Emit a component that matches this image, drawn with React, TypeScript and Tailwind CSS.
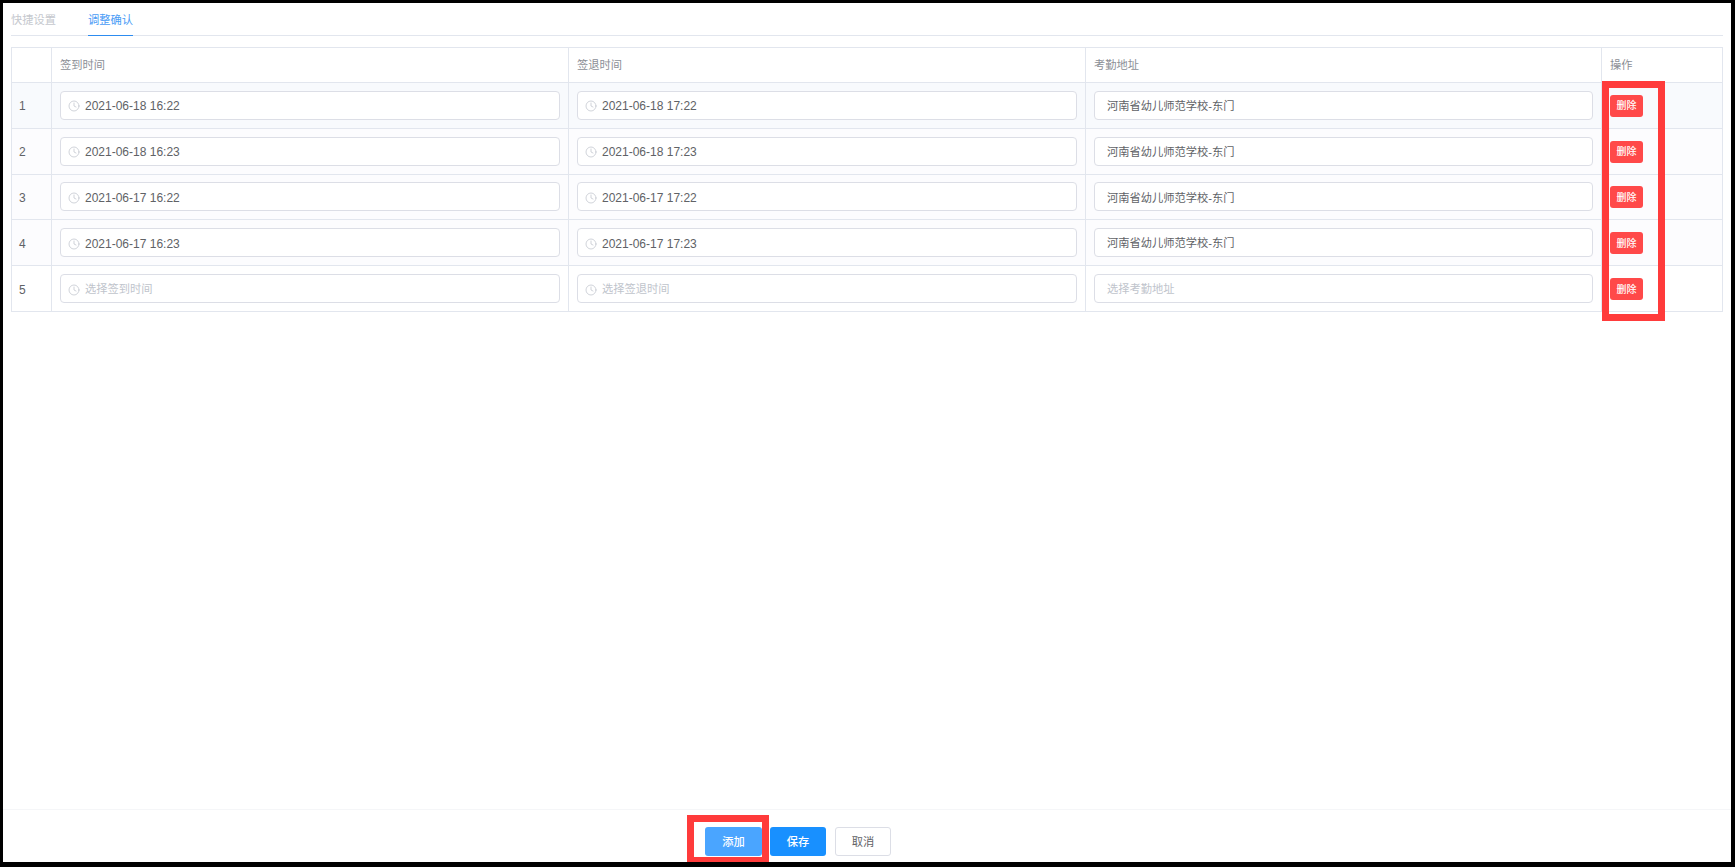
import { Clock } from "lucide-react";

type Row = {
  id: number;
  signIn: string;
  signOut: string;
  address: string;
};

const rows: Row[] = [
  { id: 1, signIn: "2021-06-18 16:22", signOut: "2021-06-18 17:22", address: "河南省幼儿师范学校-东门" },
  { id: 2, signIn: "2021-06-18 16:23", signOut: "2021-06-18 17:23", address: "河南省幼儿师范学校-东门" },
  { id: 3, signIn: "2021-06-17 16:22", signOut: "2021-06-17 17:22", address: "河南省幼儿师范学校-东门" },
  { id: 4, signIn: "2021-06-17 16:23", signOut: "2021-06-17 17:23", address: "河南省幼儿师范学校-东门" },
  { id: 5, signIn: "", signOut: "", address: "" },
];

const gridCols = "grid grid-cols-[40px_517px_517px_516px_1fr]";

function TimeInput({ value, placeholder }: { value: string; placeholder: string }) {
  return (
    <div className="flex h-[29px] w-full items-center rounded-[4px] border border-[#dcdee6] bg-white pt-[2px] pl-[7px]">
      <Clock size={12} strokeWidth={1.5} className="shrink-0 text-[#c0c4cc]" />
      <span className={value ? "ml-[5px] text-[12px] text-[#606266]" : "ml-[5px] text-[11.25px] text-[#c0c4cc]"}>
        {value || placeholder}
      </span>
    </div>
  );
}

function TextInput({ value, placeholder }: { value: string; placeholder: string }) {
  return (
    <div className="flex h-[29px] w-full items-center rounded-[4px] border border-[#dcdee6] bg-white pt-[2px] pl-[12px]">
      <span className={`text-[11.25px] ${value ? "text-[#606266]" : "text-[#c0c4cc]"}`}>
        {value || placeholder}
      </span>
    </div>
  );
}

function TableRow({ row }: { row: Row }) {
  const bg = row.id === 1 ? "bg-[#f8fafd]" : row.id === 5 ? "bg-white" : "bg-[#fcfcfe]";
  return (
    <div className={`${gridCols} h-[45.8px] border-b border-[#e2e6ee] ${bg}`}>
      <div className="flex items-center border-r border-[#e2e6ee] pt-[2px] pl-[7px] text-[12px] text-[#606266]">
        {row.id}
      </div>
      <div className="flex items-center border-r border-[#e2e6ee] px-[8px]">
        <TimeInput value={row.signIn} placeholder="选择签到时间" />
      </div>
      <div className="flex items-center border-r border-[#e2e6ee] px-[8px]">
        <TimeInput value={row.signOut} placeholder="选择签退时间" />
      </div>
      <div className="flex items-center border-r border-[#e2e6ee] px-[8px]">
        <TextInput value={row.address} placeholder="选择考勤地址" />
      </div>
      <div className="flex items-center pt-[1px] pl-[8px]">
        <button className="flex h-[22px] w-[33px] items-center justify-center rounded-[3px] bg-[#ff4949] text-[10px] font-medium text-white">
          删除
        </button>
      </div>
    </div>
  );
}

export default function App() {
  return (
    <div className="h-[867px] bg-black pt-[3px] pr-[4px] pb-[5px] pl-[3px] font-['Liberation_Sans','Noto_Sans_CJK_SC',sans-serif]">
      <div className="relative flex h-full flex-col bg-white">
        <div className="mx-[8px] flex h-[33px] gap-[32px] border-b border-[#e2e6ee] text-[11.25px]">
          <div className="flex h-[32px] items-center pt-[3px] text-[#c5c8ce]">快捷设置</div>
          <div className="flex h-[33px] items-center border-b border-[#2d8cf0] pt-[3px] text-[#4a9cf6]">调整确认</div>
        </div>

        <div className="mx-[8px] mt-[11px] border-x border-t border-[#e2e6ee]">
          <div className={`${gridCols} h-[35px] border-b border-[#e2e6ee] text-[11.25px] text-[#8c8f96]`}>
            <div className="border-r border-[#e2e6ee]" />
            <div className="flex items-center border-r border-[#e2e6ee] pl-[8px]">签到时间</div>
            <div className="flex items-center border-r border-[#e2e6ee] pl-[8px]">签退时间</div>
            <div className="flex items-center border-r border-[#e2e6ee] pl-[8px]">考勤地址</div>
            <div className="flex items-center pl-[8px]">操作</div>
          </div>
          {rows.map((row) => (
            <TableRow key={row.id} row={row} />
          ))}
        </div>

        <div className="mt-auto flex h-[53px] items-start gap-[8px] border-t border-[#f5f6f8] pt-[17px] pl-[702px] text-[11.25px]">
          <button className="h-[29px] w-[57px] rounded-[3px] bg-[#4aa5ff] pt-[2px] font-medium text-white">添加</button>
          <button className="h-[29px] w-[56px] rounded-[3px] bg-[#1890ff] pt-[2px] font-medium text-white">保存</button>
          <button className="ml-[1px] h-[29px] w-[56px] rounded-[3px] border border-[#dcdee6] bg-white pt-[2px] text-[#606266]">取消</button>
        </div>

        {/* red annotation boxes from the original screenshot */}
        <div className="absolute top-[78px] left-[1599px] h-[240px] w-[63px] border-[7px] border-[#ff3b3b]" />
        <div className="absolute top-[812px] left-[684px] h-[47px] w-[82px] border-x-[7px] border-t-[7px] border-b-[5px] border-[#ff3b3b]" />
      </div>
    </div>
  );
}
